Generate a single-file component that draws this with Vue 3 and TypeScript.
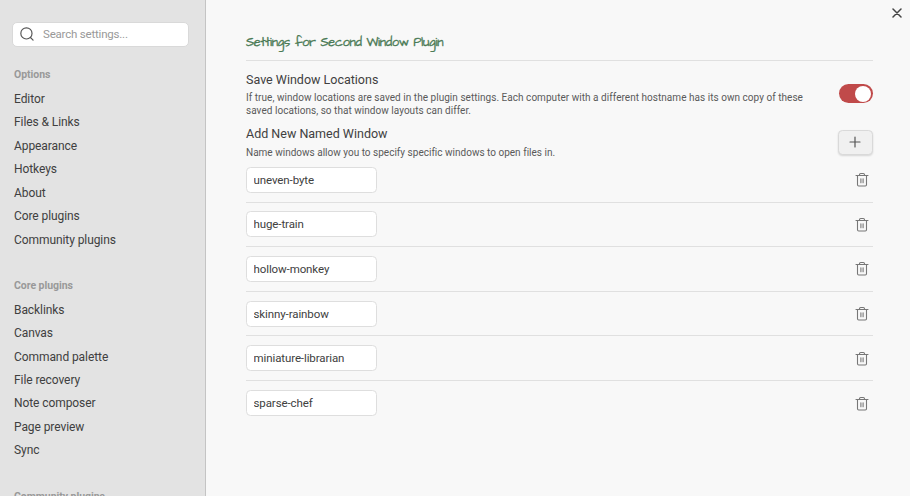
<script setup lang="ts">
import { ref } from 'vue'

interface NavGroup {
  title: string
  items: string[]
}

const groups: NavGroup[] = [
  {
    title: 'Options',
    items: ['Editor', 'Files & Links', 'Appearance', 'Hotkeys', 'About', 'Core plugins', 'Community plugins'],
  },
  {
    title: 'Core plugins',
    items: ['Backlinks', 'Canvas', 'Command palette', 'File recovery', 'Note composer', 'Page preview', 'Sync'],
  },
  { title: 'Community plugins', items: [] },
]

const query = ref('')
const saveLocations = ref(true)
const windows = ref<string[]>([
  'uneven-byte',
  'huge-train',
  'hollow-monkey',
  'skinny-rainbow',
  'miniature-librarian',
  'sparse-chef',
])

function addWindow(): void {
  windows.value.push('new-window')
}

function removeWindow(index: number): void {
  windows.value.splice(index, 1)
}
</script>

<template>
  <div class="modal">
    <aside class="sidebar">
      <label class="search">
        <svg class="search-icon" viewBox="0 0 24 24">
          <circle cx="11" cy="11" r="9.6" />
          <path d="M18 18 22.4 22.4" />
        </svg>
        <input v-model="query" class="search-input" type="text" placeholder="Search settings..." />
      </label>
      <nav v-for="group in groups" :key="group.title" class="group">
        <div class="group-title">{{ group.title }}</div>
        <div v-for="item in group.items" :key="item" class="nav-item">{{ item }}</div>
      </nav>
    </aside>

    <main class="content">
      <button class="close" aria-label="Close">
        <svg viewBox="0 0 10 10"><path d="M1 1 9 9M9 1 1 9" /></svg>
      </button>
      <h2 class="title">Settings for Second Window Plugin</h2>

      <section class="setting save">
        <div class="info">
          <div class="name">Save Window Locations</div>
          <div class="desc">
            If true, window locations are saved in the plugin settings. Each computer with a different hostname has its own copy of these<br />
            saved locations, so that window layouts can differ.
          </div>
        </div>
        <button class="toggle" :class="{ on: saveLocations }" aria-label="Save" @click="saveLocations = !saveLocations">
          <span class="knob"></span>
        </button>
      </section>

      <section class="setting add">
        <div class="info">
          <div class="name">Add New Named Window</div>
          <div class="desc">Name windows allow you to specify specific windows to open files in.</div>
        </div>
        <button class="add-button" aria-label="Add" @click="addWindow">
          <svg viewBox="0 0 12 12"><path d="M6 1V11M1 6H11" /></svg>
        </button>
      </section>

      <div class="list">
        <div v-for="(name, i) in windows" :key="i" class="row">
          <input v-model="windows[i]" class="field" type="text" spellcheck="false" />
          <button class="trash" aria-label="Delete" @click="removeWindow(i)">
            <svg viewBox="0 0 14 15">
              <path d="M1 3.5H13M2.5 3.5V12.8Q2.5 14 3.7 14H10.3Q11.5 14 11.5 12.8V3.5M4.5 3.5V2.7Q4.5 1.5 5.7 1.5H8.3Q9.5 1.5 9.5 2.7V3.5M5.9 6.8V10.8M8.1 6.8V10.8" />
            </svg>
          </button>
        </div>
      </div>
    </main>
  </div>
</template>

<style>
body {
  margin: 0;
  overflow: hidden;
}
</style>

<style scoped>
.modal {
  display: flex;
  box-sizing: border-box;
  width: 100%;
  height: 496px;
  overflow: hidden;
  background: #f8f8f8;
  color: #404040;
  font-family: Roboto, "Liberation Sans", sans-serif;
  font-size: 12px;
}
button,
input {
  box-sizing: border-box;
  margin: 0;
  padding: 0;
  border: 0;
  background: none;
  font: inherit;
  color: inherit;
  letter-spacing: inherit;
  outline: none;
}
svg {
  display: block;
  fill: none;
  stroke: currentColor;
  stroke-linecap: round;
  stroke-linejoin: round;
}
.sidebar {
  box-sizing: border-box;
  flex: none;
  width: 206px;
  height: 496px;
  padding: 21.5px 17px 0 12px;
  overflow: hidden;
  background: #e3e3e3;
  border-right: 1px solid #c4c4c4;
}
.search {
  box-sizing: border-box;
  display: flex;
  align-items: center;
  gap: 9px;
  width: 177px;
  height: 25px;
  padding: 0 7px;
  margin-bottom: 16.5px;
  border: 1px solid #d9d9d9;
  border-radius: 5px;
  background: #fff;
}
.search-icon {
  flex: none;
  width: 14px;
  height: 14px;
  overflow: visible;
  stroke-width: 2;
  color: #555;
}
.search-input {
  width: 120px;
  font-size: 11.5px;
  letter-spacing: -0.2px;
}
.search-input::placeholder {
  color: #999;
  opacity: 1;
}
.group {
  margin-bottom: 21.9px;
}
.group-title {
  height: 23px;
  margin-bottom: 1.9px;
  padding-left: 2px;
  line-height: 23px;
  font-size: 10.5px;
  font-weight: 700;
  letter-spacing: -0.04px;
  color: #999;
}
.nav-item {
  height: 23.45px;
  padding-left: 2px;
  line-height: 23.45px;
  letter-spacing: -0.08px;
}
.content {
  position: relative;
  box-sizing: border-box;
  flex: 1;
  min-width: 0;
  padding: 30px 37.5px 0 40px;
}
.close {
  position: absolute;
  top: 8px;
  right: 8px;
  width: 10px;
  height: 10px;
  color: #444;
}
.close svg {
  width: 10px;
  height: 10px;
  stroke-width: 1.5;
}
.title {
  box-sizing: border-box;
  height: 31px;
  margin: 0;
  border-bottom: 1px solid #e0e0e0;
  line-height: 26px;
  font-family: "Architects Daughter", cursive;
  font-size: 12.5px;
  font-weight: 400;
  letter-spacing: -0.2px;
  color: #4a7a55;
  -webkit-text-stroke: 0.35px #4a7a55;
}
.setting {
  display: flex;
  justify-content: space-between;
  box-sizing: border-box;
}
.save {
  height: 64px;
  padding-top: 10px;
}
.add {
  height: 33px;
}
.info {
  flex: none;
  white-space: nowrap;
}
.name {
  height: 17px;
  line-height: 17px;
  font-size: 12.5px;
  letter-spacing: 0;
}
.desc {
  padding-top: 3px;
  line-height: 13px;
  font-size: 10px;
  letter-spacing: 0.035px;
  color: #5a5a5a;
}
.add .desc {
  padding-top: 4px;
  letter-spacing: 0.01px;
}
.toggle {
  flex: none;
  width: 34px;
  height: 19px;
  margin-top: 13px;
  padding: 0 1.5px;
  border-radius: 10px;
  background: #aaa;
  display: flex;
  align-items: center;
}
.toggle.on {
  justify-content: flex-end;
  background: #c04a4a;
}
.knob {
  width: 16px;
  height: 16px;
  border-radius: 50%;
  background: #fff;
}
.add-button {
  display: flex;
  align-items: center;
  justify-content: center;
  flex: none;
  width: 35px;
  height: 25px;
  margin-top: 4.5px;
  border: 1px solid #d9d9d9;
  border-radius: 4.5px;
  background: #f0f0f0;
  box-shadow: 0 1px 2px rgba(0, 0, 0, 0.14);
  color: #555;
}
.add-button svg {
  width: 12px;
  height: 12px;
  stroke-width: 1.2;
}
.row {
  box-sizing: border-box;
  display: flex;
  align-items: center;
  justify-content: space-between;
  height: 44.6px;
  padding-right: 4px;
  border-bottom: 1px solid #e0e0e0;
}
.row:last-child {
  border-bottom: 0;
}
.field {
  width: 131px;
  height: 26px;
  padding: 0 6.5px;
  border: 1px solid #dedede;
  border-radius: 4.5px;
  background: #fff;
  font-size: 11.5px;
  letter-spacing: -0.1px;
}
.trash {
  width: 14px;
  height: 15px;
  color: #777;
}
.trash svg {
  width: 14px;
  height: 15px;
  stroke-width: 1.1;
}
</style>
